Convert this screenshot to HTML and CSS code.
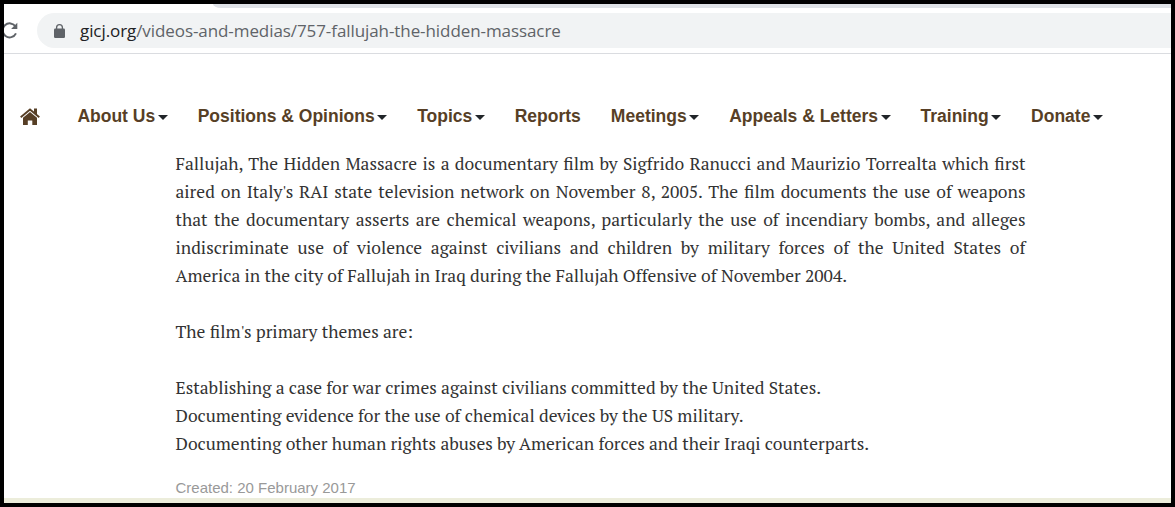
FILE: index.html
```
<!DOCTYPE html>
<html lang="en">
<head>
    <meta charset="utf-8">
    <title>Fallujah, The Hidden Massacre</title>
    <link rel="stylesheet" href="styles.css">
</head>
<body>
    <div class="browser-top">
        <div class="tab-strip"></div>
        <div class="toolbar">
            <svg class="icon-reload" width="15" height="17" viewBox="0 0 15 17">
                <path d="M12.6 4.6A7 7 0 1 0 13 11.4" fill="none" stroke="#5f6368" stroke-width="2"/>
                <path d="M14.3 .8V7H8.1z" fill="#5f6368"/>
            </svg>
            <div class="address">
                <svg class="icon-lock" width="11" height="14" viewBox="0 0 11 14">
                    <rect x="0" y="4.5" width="11" height="9.5" rx="1.2" fill="#5f6368"/>
                    <path d="M2.6 6V3.6a2.9 2.9 0 0 1 5.8 0V6" fill="none" stroke="#5f6368" stroke-width="1.3"/>
                </svg>
                <span class="url"><span class="host">gicj.org</span>/videos-and-medias/757-fallujah-the-hidden-massacre</span>
            </div>
        </div>
    </div>

    <nav class="menu">
        <a class="home" href="#">
            <svg width="20" height="17" viewBox="0 0 20 17">
                <path d="M.7 9.2L10 1.5l9.3 7.7" fill="none" stroke="#573f26" stroke-width="1.9"/>
                <path d="M14 .6h3v6.2l-3-2.4z" fill="#573f26"/>
                <path d="M10 3.9l7 5.8V17h-4.7v-4.4H7.8V17H3V9.7z" fill="#573f26"/>
            </svg>
        </a>
        <a class="drop" href="#">About Us</a>
        <a class="drop" href="#">Positions &amp; Opinions</a>
        <a class="drop" href="#">Topics</a>
        <a href="#">Reports</a>
        <a class="drop" href="#">Meetings</a>
        <a class="drop" href="#">Appeals &amp; Letters</a>
        <a class="drop" href="#">Training</a>
        <a class="drop" href="#">Donate</a>
    </nav>

    <main class="article">
        <p>Fallujah, The Hidden Massacre is a documentary film by Sigfrido Ranucci and Maurizio Torrealta which first aired on Italy's RAI state television network on November 8, 2005. The film documents the use of weapons that the documentary asserts are chemical weapons, particularly the use of incendiary bombs, and alleges indiscriminate use of violence against civilians and children by military forces of the United States of America in the city of Fallujah in Iraq during the Fallujah Offensive of November 2004.</p>
        <p>The film's primary themes are:</p>
        <p>
            Establishing a case for war crimes against civilians committed by the United States.<br>
            Documenting evidence for the use of chemical devices by the US military.<br>
            Documenting other human rights abuses by American forces and their Iraqi counterparts.
        </p>
        <div class="created">Created: 20 February 2017</div>
    </main>
    <div class="footer"></div>
</body>
</html>
```
FILE: styles.css
```
* {
    box-sizing: border-box;
}

body {
    margin: 0;
    width: 1175px;
    height: 507px;
    border: 4px solid #000;
    background-color: #fff;
    display: flex;
    flex-direction: column;
    overflow: hidden;
}

a {
    text-decoration: none;
}

/* browser */
.browser-top {
    flex-shrink: 0;
    height: 50px;
    border-bottom: 1px solid #dadce0;
}

.tab-strip {
    height: 4px;
    margin-left: 209px;
    background-color: #dee1e6;
    border-bottom-left-radius: 8px 4px;
}

.toolbar {
    display: flex;
    align-items: center;
    padding-top: 5px;
}

.icon-reload {
    margin-left: -1px;
    margin-top: -1px;
}

.address {
    flex-grow: 1;
    height: 35px;
    margin-left: 19px;
    padding-left: 17px;
    display: flex;
    align-items: center;
    background-color: #f1f3f4;
    border-radius: 18px 0 0 18px;
}

.url {
    margin-left: 15px;
    font-family: "Segoe UI", "Open Sans", sans-serif;
    font-size: 17px;
    letter-spacing: -0.08px;
    color: #5f6368;
    white-space: nowrap;
}

.host {
    color: #202124;
}

/* menu */
.menu {
    flex-shrink: 0;
    display: flex;
    align-items: center;
    gap: 30px;
    height: 24px;
    margin-top: 50px;
    padding-left: 16px;
}

.menu a {
    font-family: "Liberation Sans", Arial, sans-serif;
    font-weight: bold;
    font-size: 17.5px;
    line-height: 24px;
    color: #573f26;
    white-space: nowrap;
}

.menu .home {
    height: 17px;
    margin-right: 7.4px;
    display: flex;
}

.drop::after {
    content: "";
    display: inline-block;
    margin-left: 2.5px;
    vertical-align: 2px;
    border-top: 5px solid #212529;
    border-left: 5px solid transparent;
    border-right: 5px solid transparent;
}

/* article */
.article {
    flex-shrink: 0;
    width: 850px;
    margin: 22px 0 0 171.5px;
    font-family: "PT Serif", "Liberation Serif", serif;
    font-size: 17.5px;
    line-height: 28px;
    color: #333;
}

.article p {
    margin: 0 0 28px;
    text-align: justify;
}

.created {
    margin-top: -8px;
    font-family: "Liberation Sans", Arial, sans-serif;
    font-size: 15px;
    line-height: 20px;
    color: #999;
}

.footer {
    flex-shrink: 0;
    height: 5px;
    margin-top: auto;
    background-color: #eceddb;
}
```
